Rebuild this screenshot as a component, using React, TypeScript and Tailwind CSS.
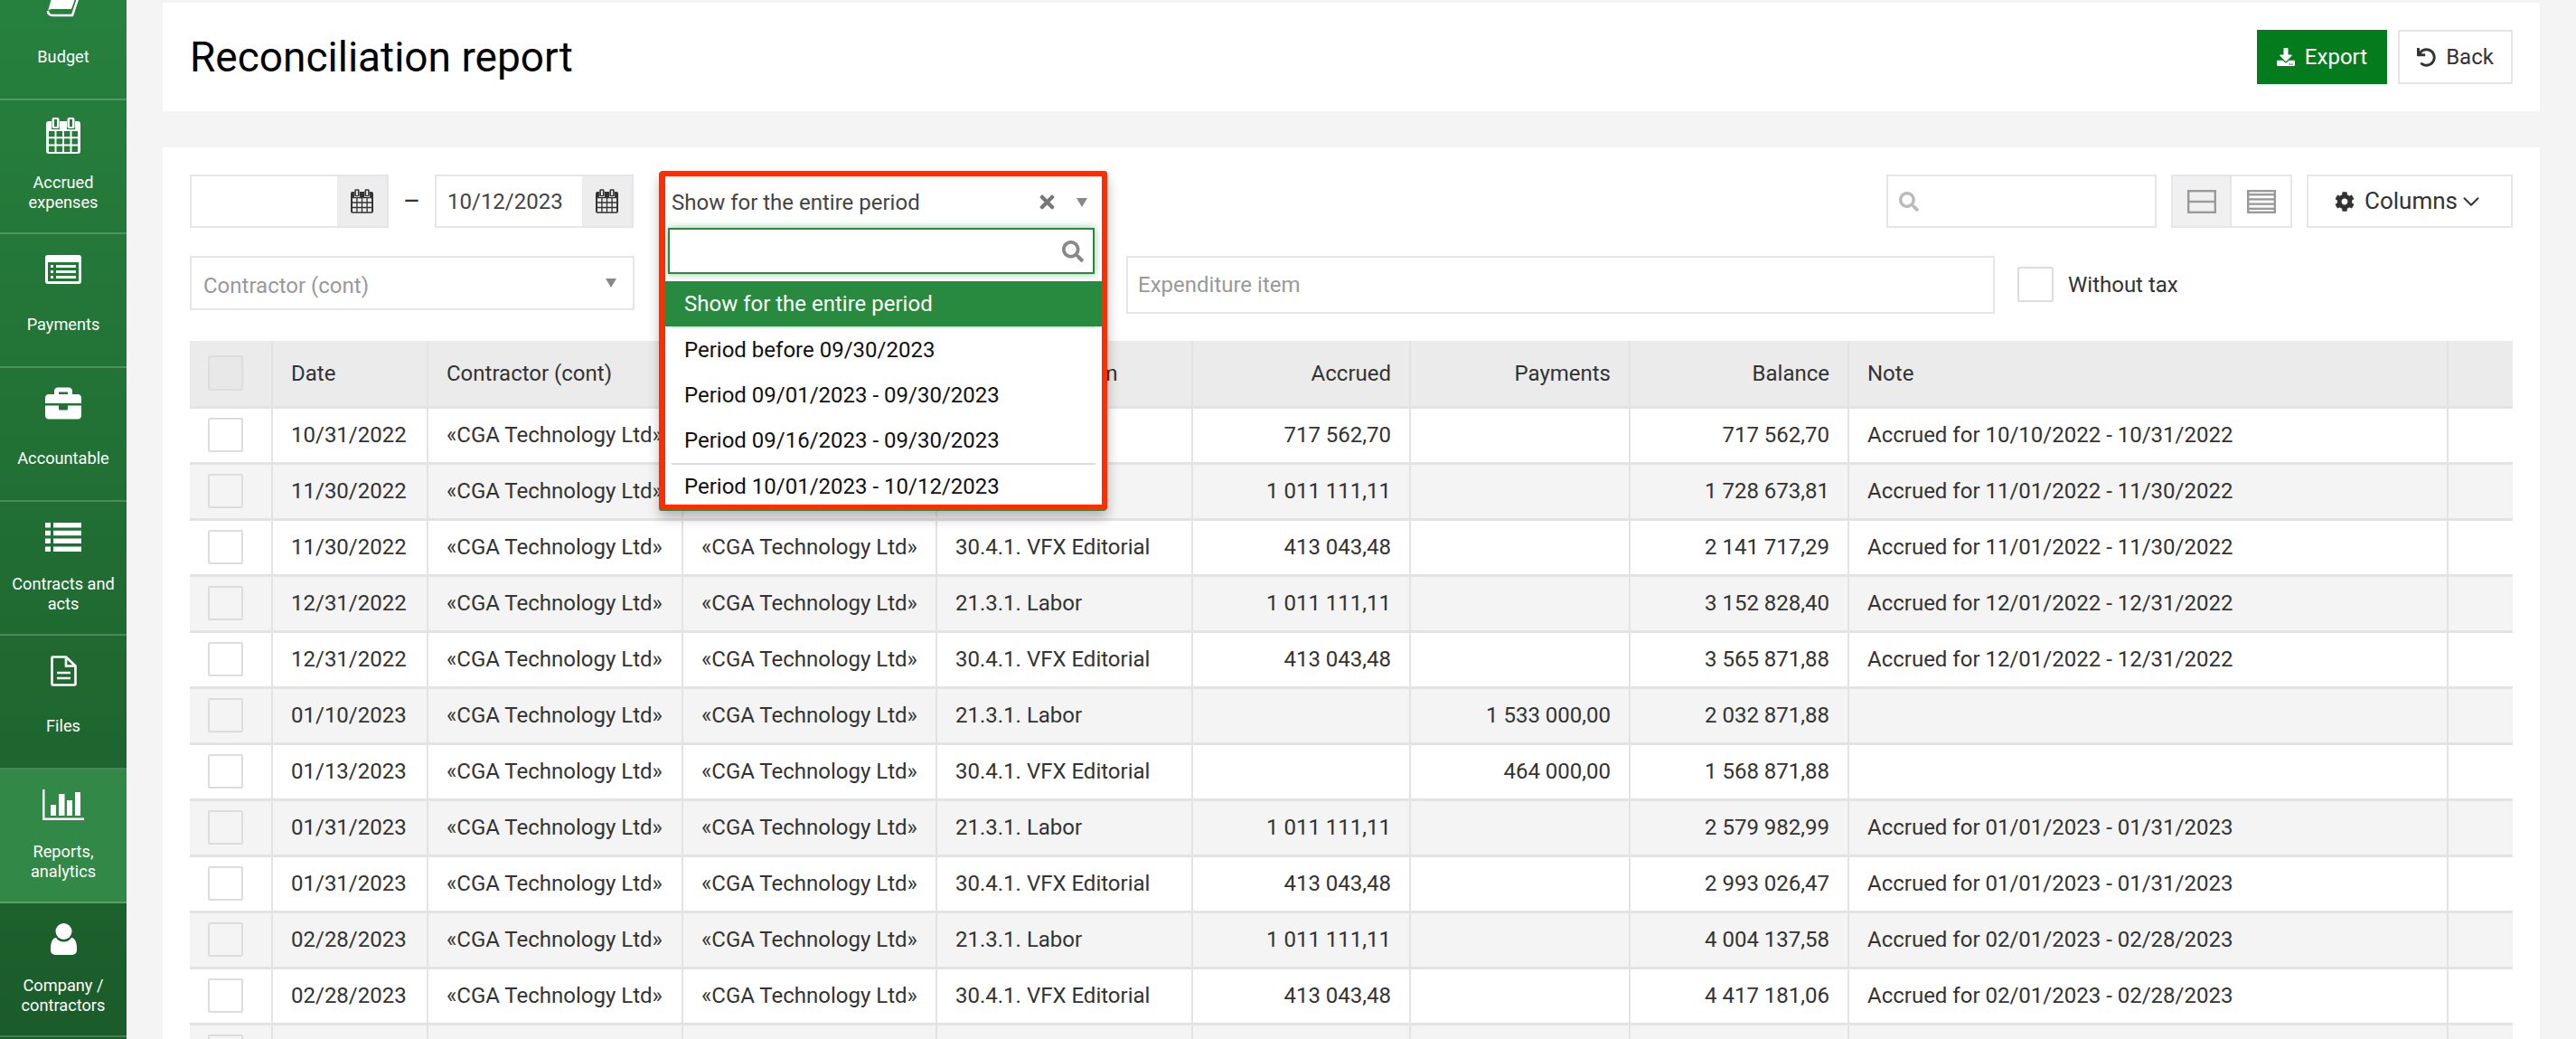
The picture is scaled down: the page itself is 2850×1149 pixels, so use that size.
import { ChevronDown } from "lucide-react"
import { FaBriefcase, FaCog, FaDownload, FaSearch, FaTimes, FaUndo } from "react-icons/fa"

const cellHoles = () => {
  let d = ""
  for (let r = 0; r < 3; r++) {
    for (let c = 0; c < 4; c++) {
      d += `M${3 + c * 8.5} ${15 + r * 8.3}h6.5v6.3h-6.5z`
    }
  }
  return d
}

function CalendarIcon({ className }: { className: string }) {
  const body = "M3 4h32a3 3 0 0 1 3 3v30a3 3 0 0 1-3 3h-32a3 3 0 0 1-3-3v-30a3 3 0 0 1 3-3z"
  const rings = "M8.5 0h4a2 2 0 0 1 2 2v8a2 2 0 0 1-2 2h-4a2 2 0 0 1-2-2v-8a2 2 0 0 1 2-2zM25.5 0h4a2 2 0 0 1 2 2v8a2 2 0 0 1-2 2h-4a2 2 0 0 1-2-2v-8a2 2 0 0 1 2-2z"
  return (
    <svg viewBox="0 0 38 40" className={className} fill="currentColor">
      <path fillRule="evenodd" d={body + cellHoles() + "M6 4h9v9h-9zM23 4h9v9h-9z"} />
      <path fillRule="evenodd" d={rings + "M9 2h3v8h-3zM26 2h3v8h-3z"} />
    </svg>
  )
}

function BookIcon() {
  return (
    <svg viewBox="0 0 38 34" className="w-[38px] h-[34px]" fill="none">
      <path d="M2 27c0 3 2 5 5 5h22l8-24" stroke="#fff" strokeWidth="2.5" strokeLinejoin="round" />
      <path d="M2 27l7-24h27l-8 22h-21c-3 0-5 1-5 2z" fill="#fff" />
    </svg>
  )
}

function ListAltIcon() {
  return (
    <svg viewBox="0 0 40 32" className="w-[40px] h-[32px]" fill="#fff">
      <path
        fillRule="evenodd"
        d="M3 0h34a3 3 0 0 1 3 3v26a3 3 0 0 1-3 3h-34a3 3 0 0 1-3-3v-26a3 3 0 0 1 3-3zM3 8v21h34v-21z"
      />
      <path d="M6 11h3v3h-3zM6 17h3v3h-3zM6 23h3v3h-3zM12 11h22v3h-22zM12 17h22v3h-22zM12 23h22v3h-22z" />
    </svg>
  )
}

function ThListIcon() {
  return (
    <svg viewBox="0 0 40 32" className="w-[40px] h-[32px]" fill="#fff">
      <path d="M0 0h6v5.5h-6zM9 0h31v5.5h-31zM0 8.700h6v5.500h-6zM9 8.700h31v5.500h-31zM0 17.600h6v5.500h-6zM9 17.600h31v5.500h-31zM0 26.500h6v5.500h-6zM9 26.500h31v5.500h-31z" />
    </svg>
  )
}

function FileIcon() {
  return (
    <svg viewBox="0 0 29 34" className="w-[29px] h-[34px]" fill="none" stroke="#fff" strokeWidth="2.6">
      <path d="M2 1.5h15l10.500 10v20a1 1 0 0 1-1 1h-24a1 1 0 0 1-1-1v-29a1 1 0 0 1 1-1z" strokeLinejoin="round" />
      <path d="M17 2v9.500h10M7 19h15M7 25h15" />
    </svg>
  )
}

function ChartIcon() {
  return (
    <svg viewBox="0 0 46 34" className="w-[46px] h-[34px]" fill="#fff">
      <path d="M0 0h2.500v31.500h43.500v2.500h-46z" />
      <path d="M9 17h6v12h-6zM18 5h6.500v24h-6.500zM27 12h6v17h-6zM36 3h6v26h-6z" />
    </svg>
  )
}

function UserIcon() {
  return (
    <svg viewBox="0 0 29 35" className="w-[29px] h-[35px]" fill="#fff">
      <circle cx="14.500" cy="9" r="9" />
      <path d="M6 16c2 3 5 4.500 8.500 4.500s6.500-1.500 8.500-4.500c4 .5 6 5 6 12v2a5 5 0 0 1-5 5h-19a5 5 0 0 1-5-5v-2c0-7 2-11.500 6-12z" />
    </svg>
  )
}

function RowsIcon({ rows }: { rows: number }) {
  const lines: number[] = []
  for (let i = 1; i < rows; i++) lines.push((26 * i) / rows)
  return (
    <svg viewBox="0 0 32 26" className="w-[32px] h-[26px]" fill="none" stroke="#9a9a9a" strokeWidth="2.400">
      <rect x="1.200" y="1.200" width="29.600" height="23.600" />
      {lines.map((y) => (
        <path key={y} d={`M1 ${y}h30`} />
      ))}
    </svg>
  )
}

const sideItems = [
  { label: ["Budget"], icon: <BookIcon /> },
  { label: ["Accrued", "expenses"], icon: <CalendarIcon className="w-[38px] h-[40px]" /> },
  { label: ["Payments"], icon: <ListAltIcon /> },
  { label: ["Accountable"], icon: <FaBriefcase className="w-[40px] h-[40px]" /> },
  { label: ["Contracts and", "acts"], icon: <ThListIcon /> },
  { label: ["Files"], icon: <FileIcon /> },
  { label: ["Reports,", "analytics"], icon: <ChartIcon />, active: true },
  { label: ["Company /", "contractors"], icon: <UserIcon /> },
  { label: [""], icon: null },
]

const labor = "21.3.1. Labor"
const vfx = "30.4.1. VFX Editorial"

const rows = [
  { date: "10/31/2022", item: labor, accrued: "717 562,70", pay: "", balance: "717 562,70", note: "Accrued for 10/10/2022 - 10/31/2022" },
  { date: "11/30/2022", item: labor, accrued: "1 011 111,11", pay: "", balance: "1 728 673,81", note: "Accrued for 11/01/2022 - 11/30/2022" },
  { date: "11/30/2022", item: vfx, accrued: "413 043,48", pay: "", balance: "2 141 717,29", note: "Accrued for 11/01/2022 - 11/30/2022" },
  { date: "12/31/2022", item: labor, accrued: "1 011 111,11", pay: "", balance: "3 152 828,40", note: "Accrued for 12/01/2022 - 12/31/2022" },
  { date: "12/31/2022", item: vfx, accrued: "413 043,48", pay: "", balance: "3 565 871,88", note: "Accrued for 12/01/2022 - 12/31/2022" },
  { date: "01/10/2023", item: labor, accrued: "", pay: "1 533 000,00", balance: "2 032 871,88", note: "" },
  { date: "01/13/2023", item: vfx, accrued: "", pay: "464 000,00", balance: "1 568 871,88", note: "" },
  { date: "01/31/2023", item: labor, accrued: "1 011 111,11", pay: "", balance: "2 579 982,99", note: "Accrued for 01/01/2023 - 01/31/2023" },
  { date: "01/31/2023", item: vfx, accrued: "413 043,48", pay: "", balance: "2 993 026,47", note: "Accrued for 01/01/2023 - 01/31/2023" },
  { date: "02/28/2023", item: labor, accrued: "1 011 111,11", pay: "", balance: "4 004 137,58", note: "Accrued for 02/01/2023 - 02/28/2023" },
  { date: "02/28/2023", item: vfx, accrued: "413 043,48", pay: "", balance: "4 417 181,06", note: "Accrued for 02/01/2023 - 02/28/2023" },
]

const periods = ["Period before 09/30/2023", "Period 09/01/2023 - 09/30/2023", "Period 09/16/2023 - 09/30/2023"]

function Sidebar() {
  return (
    <aside className="w-[140px] shrink-0 -mt-[37px] h-[1186px] bg-gradient-to-b from-[#27823e] to-[#1b5c2a] text-white">
      {sideItems.map((item, i) => (
        <div key={i} className={`h-[148px] border-b-2 border-white/20 flex flex-col ${item.active ? "bg-[#328847]" : ""}`}>
          <div className="h-[78px] flex items-center justify-center">{item.icon}</div>
          <div className={`h-[44px] flex flex-col items-center justify-center text-[18.2px] leading-[22px] ${item.label.length > 1 ? "pt-[4px]" : ""}`}>
            {item.label.map((l) => (
              <span key={l}>{l}</span>
            ))}
          </div>
        </div>
      ))}
    </aside>
  )
}

function DateInput({ value }: { value?: string }) {
  return (
    <div className="w-[220px] h-[59px] border-2 border-[#e5e5ea] flex bg-white">
      <div className="flex-1 pl-[12px] flex items-center text-[#444]">{value}</div>
      <div className="w-[55px] bg-[#ededed] flex items-center justify-center text-[#333]">
        <CalendarIcon className="w-[25px] h-[27px]" />
      </div>
    </div>
  )
}

function PeriodDropdown() {
  return (
    <div className="absolute z-10 left-0 -top-[4px] w-[495px] h-[375px] border-[6px] border-[#ff2d00] rounded-[3px] bg-white overflow-hidden shadow-[-1px_1px_0_#288a3e,0_8px_14px_rgba(0,0,0,0.28)]">
      <div className="h-[57px] pl-[7px] pr-[16px] flex items-center text-[#444]">
        <span className="flex-1">Show for the entire period</span>
        <FaTimes className="w-[23px] h-[23px] text-[#777] mr-[21px]" />
        <span className="w-0 h-0 border-x-[6px] border-x-transparent border-t-[10px] border-t-[#888]" />
      </div>
      <div className="ml-[3px] mr-[8px] h-[51px] border-2 border-[#288a3e] shadow-[0_0_8px_rgba(40,138,62,0.5)] flex items-center justify-end pr-[10px]">
        <FaSearch className="w-[24px] h-[24px] text-[#888]" />
      </div>
      <div className="mt-[8px] h-[50px] bg-[#288a3e] text-white flex items-center pl-[21px]">Show for the entire period</div>
      <div className="mx-[7px] h-[2px] -mb-[1px] bg-[#e0e0e0]" />
      {periods.map((p) => (
        <div key={p} className="h-[50px] flex items-center pl-[21px] text-[#111]">
          {p}
        </div>
      ))}
      <div className="mx-[7px] h-[2px] bg-[#dcdcdc]" />
      <div className="h-[48px] flex items-center pl-[21px] text-[#111]">Period 10/01/2023 - 10/12/2023</div>
    </div>
  )
}

function Filters() {
  return (
    <div className="flex flex-col gap-[31px]">
      <div className="flex h-[59px]">
        <DateInput />
        <div className="w-[51px] flex items-center justify-center text-[29px] text-[#333]">–</div>
        <DateInput value="10/12/2023" />
        <div className="relative ml-[29px] w-[495px]">
          <PeriodDropdown />
        </div>
        <div className="ml-auto w-[299px] border-2 border-[#e5e5ea] flex items-center pl-[12px]">
          <FaSearch className="w-[22px] h-[22px] text-[#bbb]" />
        </div>
        <div className="ml-[16px] w-[134px] border-2 border-[#e5e5ea] flex">
          <div className="w-[65px] bg-[#f0f0f0] border-r-2 border-[#e5e5ea] flex items-center justify-center">
            <RowsIcon rows={2} />
          </div>
          <div className="flex-1 flex items-center justify-center">
            <RowsIcon rows={5} />
          </div>
        </div>
        <div className="ml-[16px] w-[228px] border-2 border-[#e5e5ea] flex items-center justify-center text-[26px] text-[#333]">
          <FaCog className="w-[22px] h-[22px] mr-[11px]" />
          Columns
          <ChevronDown className="w-[30px] h-[30px]" strokeWidth={1.6} />
        </div>
      </div>
      <div className="flex items-start">
        <div className="w-[492px] h-[60px] border-2 border-[#e5e5ea] flex items-center justify-between pl-[13px] pr-[18px] text-[#999]">
          <span className="mt-[6px]">Contractor (cont)</span>
          <span className="w-0 h-0 border-x-[6px] border-x-transparent border-t-[10px] border-t-[#888]" />
        </div>
        <div className="ml-[28px] w-[488px] h-[60px] border-2 border-[#e5e5ea]" />
        <div className="ml-[28px] w-[961px] h-[64px] border-2 border-[#e5e5ea] flex items-center pl-[11px] text-[#999]">
          Expenditure item
        </div>
        <div className="ml-[25px] mt-[12px] w-[40px] h-[39px] border-2 border-[#ddd] rounded-[2px]" />
        <div className="ml-[16px] h-[64px] flex items-center text-[#333]">Without tax</div>
      </div>
    </div>
  )
}

const cell = "border-r-2 border-b-[3px] border-[#e3e3e3] px-[20px] font-normal"

function ReportTable() {
  return (
    <table className="mt-[30px] w-[2570px] table-fixed border-collapse text-[#333]">
      <colgroup>
        <col className="w-[91px]" />
        <col className="w-[172px]" />
        <col className="w-[282px]" />
        <col className="w-[281px]" />
        <col className="w-[283px]" />
        <col className="w-[241px]" />
        <col className="w-[243px]" />
        <col className="w-[242px]" />
        <col className="w-[663px]" />
        <col className="w-[72px]" />
      </colgroup>
      <thead>
        <tr className="h-[73px] bg-[#ebebeb]">
          <th className={cell}>
            <div className="w-[39px] h-[39px] border-2 border-[#ddd] rounded-[2px] bg-[#e8e8e8]" />
          </th>
          <th className={`${cell} text-left`}>Date</th>
          <th className={`${cell} text-left`}>Contractor (cont)</th>
          <th className={`${cell} text-left`}>Contractor (cont)</th>
          <th className={`${cell} text-left`}>Expenditure item</th>
          <th className={`${cell} text-right`}>Accrued</th>
          <th className={`${cell} text-right`}>Payments</th>
          <th className={`${cell} text-right`}>Balance</th>
          <th className={`${cell} text-left`}>Note</th>
          <th className="border-b-[3px] border-[#e3e3e3]" />
        </tr>
      </thead>
      <tbody>
        {rows.map((r, i) => (
          <tr key={i} className={`h-[62px] ${i % 2 ? "bg-[#f4f4f4]" : "bg-white"}`}>
            <td className={cell}>
              <div className="w-[39px] h-[38px] border-2 border-[#ddd] rounded-[2px]" />
            </td>
            <td className={cell}>{r.date}</td>
            <td className={cell}>«CGA Technology Ltd»</td>
            <td className={cell}>«CGA Technology Ltd»</td>
            <td className={cell}>{r.item}</td>
            <td className={`${cell} text-right`}>{r.accrued}</td>
            <td className={`${cell} text-right`}>{r.pay}</td>
            <td className={`${cell} text-right`}>{r.balance}</td>
            <td className={cell}>{r.note}</td>
            <td className="border-b-[3px] border-[#e3e3e3]" />
          </tr>
        ))}
        <tr className="h-[62px] bg-[#f4f4f4]">
          <td className={cell}>
            <div className="w-[39px] h-[38px] border-2 border-[#ddd] rounded-[2px]" />
          </td>
          <td className={cell} />
          <td className={cell} />
          <td className={cell} />
          <td className={cell} />
          <td className={cell} />
          <td className={cell} />
          <td className={cell} />
          <td className={cell} />
          <td />
        </tr>
      </tbody>
    </table>
  )
}

export default function App() {
  return (
    <div className="w-[2850px] h-[1149px] overflow-hidden flex bg-[#f4f4f4] font-['Roboto',sans-serif] text-[24px]">
      <Sidebar />
      <main className="flex-1 pt-[3px] px-[40px] flex flex-col gap-[40px]">
        <header className="h-[120px] shrink-0 bg-white px-[30px] flex items-center justify-between">
          <h1 className="text-[46px] leading-none text-black font-normal">Reconciliation report</h1>
          <div className="flex gap-[12px]">
            <button className="w-[144px] h-[60px] bg-[#047c1d] text-white flex items-center justify-center">
              <FaDownload className="w-[20px] h-[20px] mr-[11px]" />
              Export
            </button>
            <button className="w-[127px] h-[60px] border-2 border-[#e5e5e5] text-[#333] flex items-center justify-center">
              <FaUndo className="w-[21px] h-[21px] mr-[11px]" />
              Back
            </button>
          </div>
        </header>
        <section className="flex-1 bg-white px-[30px] pt-[30px]">
          <Filters />
          <ReportTable />
        </section>
      </main>
    </div>
  )
}
